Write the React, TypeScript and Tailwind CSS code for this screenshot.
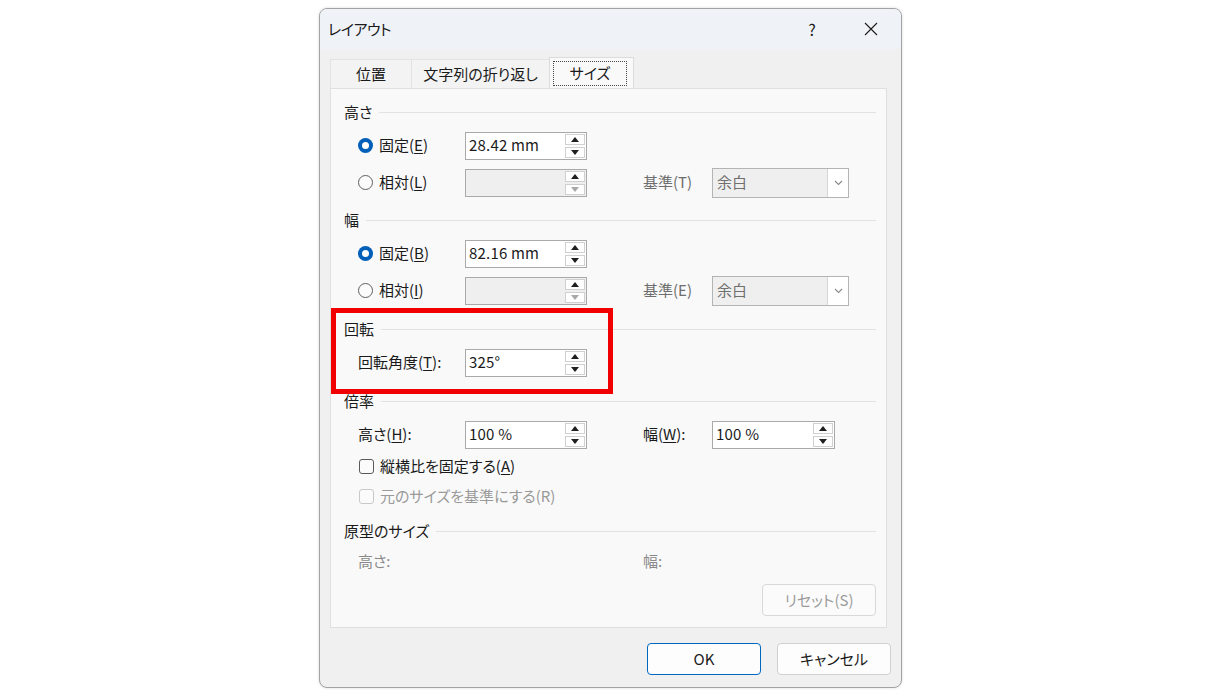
import type { ReactNode } from "react";

const font = {
  fontFamily: '"Noto Sans CJK JP", "Noto Sans", sans-serif',
  fontFeatureSettings: '"palt"',
};

function Acc({ children }: { children: ReactNode }) {
  return <u className="underline decoration-1 underline-offset-[2px]">{children}</u>;
}

function Tri({ up, muted }: { up?: boolean; muted?: boolean }) {
  return (
    <svg width="8" height="5" viewBox="0 0 8 5">
      <polygon
        points={up ? "0,5 8,5 4,0" : "0,0 8,0 4,5"}
        fill={muted ? "#a8a8a8" : "#1f1f1f"}
      />
    </svg>
  );
}

function Spin({
  value,
  disabled,
  w = "w-[122px]",
}: {
  value?: string;
  disabled?: boolean;
  w?: string;
}) {
  return (
    <div
      className={`flex h-[28px] ${w} items-stretch border border-[#a9a9a9] ${
        disabled ? "bg-[#efefef]" : "bg-white"
      }`}
    >
      <span className="flex flex-1 items-center pl-[3px] text-[15px] tracking-[0.2px] text-[#1a1a1a]">
        {value}
      </span>
      <div className="flex w-[21px] flex-col gap-[2px] py-[1px] pr-[1px]">
        <div className="flex h-[11px] items-center justify-center border border-[#d0d0d0] bg-white">
          <Tri up />
        </div>
        <div className="flex h-[11px] items-center justify-center border border-[#d0d0d0] bg-white">
          <Tri muted={disabled} />
        </div>
      </div>
    </div>
  );
}

function Select() {
  return (
    <div className="flex h-[30px] w-[137px] items-stretch border border-[#b4b4b4] bg-[#efefef]">
      <span className="flex flex-1 items-center pl-[4px] text-[15px] text-[#707070]">余白</span>
      <div className="flex w-[21px] items-center justify-center border-l border-[#d6d6d6] bg-white">
        <svg width="9" height="6" viewBox="0 0 9 6">
          <path d="M1 1 L4.5 4.5 L8 1" fill="none" stroke="#8a8a8a" strokeWidth="1.1" />
        </svg>
      </div>
    </div>
  );
}

function Radio({ checked }: { checked?: boolean }) {
  return checked ? (
    <span className="flex h-[15px] w-[15px] items-center justify-center rounded-full bg-[#005fb8]">
      <span className="h-[7px] w-[7px] rounded-full bg-white" />
    </span>
  ) : (
    <span className="h-[15px] w-[15px] rounded-full border border-[#5f5f5f] bg-[#fbfbfb]" />
  );
}

function Check({ disabled }: { disabled?: boolean }) {
  return (
    <span
      className={`h-[15px] w-[15px] rounded-[3px] border bg-[#fbfbfb] ${
        disabled ? "border-[#c9c9c9]" : "border-[#5a5a5a]"
      }`}
    />
  );
}

function Header({ title, mt = "mt-[10px]" }: { title: string; mt?: string }) {
  return (
    <div className={`flex h-[20px] items-center ${mt}`}>
      <span className="text-[15px] text-[#1a1a1a]">{title}</span>
      <span className="ml-[7px] h-px flex-1 bg-[#e2e2e2]" />
    </div>
  );
}

function Tab({ label, active, w }: { label: string; active?: boolean; w: string }) {
  if (active) {
    return (
      <div
        className={`-mb-px flex h-[32px] ${w} items-center justify-center border border-b-0 border-[#dcdcdc] bg-[#f9f9f9] py-[3px] pl-[3px] pr-[6px]`}
      >
        <div className="flex h-full w-full items-center justify-center border border-dotted border-[#444]">
          <span className="text-[15px] text-[#1a1a1a]">{label}</span>
        </div>
      </div>
    );
  }
  return (
    <div
      className={`flex h-[29px] ${w} items-center justify-center border border-b-0 border-r-0 border-[#e3e3e3] bg-[#f3f3f3]`}
    >
      <span className="text-[15px] text-[#1a1a1a]">{label}</span>
    </div>
  );
}

export default function App() {
  return (
    <div className="h-[699px] overflow-hidden bg-white pl-[319px] pt-[8px]" style={font}>
      <div className="flex h-[680px] w-[583px] flex-col overflow-hidden rounded-[8px] border border-[#a3a3a3] bg-[#f0f0f0] shadow-[0_0_3px_rgba(0,0,0,0.15)]">
        {/* title bar */}
        <div className="flex h-[40px] shrink-0 items-center bg-[#eff3f8] pl-[8px]">
          <span className="text-[15px] tracking-[-0.5px] text-[#1a1a1a]">レイアウト</span>
          <div className="ml-auto flex items-center gap-[13px] pr-[7px]">
            <span className="flex h-[30px] w-[46px] items-center justify-center text-[16px] text-[#1a1a1a]">
              ?
            </span>
            <span className="flex h-[30px] w-[46px] items-center justify-center">
              <svg width="14" height="14" viewBox="0 0 14 14">
                <path d="M1 1 L13 13 M13 1 L1 13" stroke="#1a1a1a" strokeWidth="1.1" />
              </svg>
            </span>
          </div>
        </div>

        {/* tabs */}
        <div className="ml-[10px] mt-[8px] flex items-end">
          <Tab label="位置" w="w-[81px]" />
          <Tab label="文字列の折り返し" w="w-[138px]" />
          <Tab label="サイズ" w="w-[85px]" active />
        </div>

        {/* tab page */}
        <div className="relative ml-[10px] h-[540px] w-[557px] border border-[#e0e0e0] bg-[#f9f9f9] pb-[10px] pl-[13px] pr-[10px] pt-[13px] text-[15px] text-[#1a1a1a]">
          <Header title="高さ" mt="mt-0" />
          <div className="mt-[5px] flex h-[37px] items-center pl-[14px]">
            <div className="flex w-[107px] items-center gap-[6px]">
              <Radio checked />
              <span>
                固定(<Acc>E</Acc>)
              </span>
            </div>
            <Spin value="28.42 mm" />
          </div>
          <div className="flex h-[37px] items-center pl-[14px]">
            <div className="flex w-[107px] items-center gap-[6px]">
              <Radio />
              <span>
                相対(<Acc>L</Acc>)
              </span>
            </div>
            <Spin disabled />
            <span className="ml-[56px] w-[69px] text-[#6e6e6e]">基準(T)</span>
            <Select />
          </div>

          <Header title="幅" mt="mt-[9px]" />
          <div className="mt-[5px] flex h-[37px] items-center pl-[14px]">
            <div className="flex w-[107px] items-center gap-[6px]">
              <Radio checked />
              <span>
                固定(<Acc>B</Acc>)
              </span>
            </div>
            <Spin value="82.16 mm" />
          </div>
          <div className="flex h-[37px] items-center pl-[14px]">
            <div className="flex w-[107px] items-center gap-[6px]">
              <Radio />
              <span>
                相対(<Acc>I</Acc>)
              </span>
            </div>
            <Spin disabled />
            <span className="ml-[56px] w-[69px] text-[#6e6e6e]">基準(E)</span>
            <Select />
          </div>

          <Header title="回転" />
          <div className="mt-[5px] flex h-[37px] items-center pl-[14px]">
            <span className="w-[107px]">
              回転角度(<Acc>T</Acc>):
            </span>
            <Spin value="325°" />
          </div>

          <Header title="倍率" />
          <div className="mt-[5px] flex h-[37px] items-center pl-[14px]">
            <span className="w-[107px]">
              高さ(<Acc>H</Acc>):
            </span>
            <Spin value="100 %" />
            <span className="ml-[56px] w-[69px]">
              幅(<Acc>W</Acc>):
            </span>
            <Spin value="100 %" w="w-[123px]" />
          </div>
          <div className="flex h-[26px] items-center gap-[6px] pl-[15px]">
            <Check />
            <span>
              縦横比を固定する(<Acc>A</Acc>)
            </span>
          </div>
          <div className="flex h-[34px] items-center gap-[6px] pl-[15px] text-[#9a9a9a]">
            <Check disabled />
            <span>元のサイズを基準にする(R)</span>
          </div>

          <Header title="原型のサイズ" mt="mt-[8px]" />
          <div className="mt-[5px] flex h-[30px] items-center pl-[14px] text-[#8a8a8a]">
            <span className="w-[285px]">高さ:</span>
            <span>幅:</span>
          </div>
          <div className="mt-[8px] flex justify-end">
            <div className="flex h-[32px] w-[114px] items-center justify-center rounded-[4px] border border-[#d8d8d8] bg-[#fbfbfb] text-[#9c9c9c]">
              リセット(S)
            </div>
          </div>

          {/* red highlight around the rotation group */}
          <div className="pointer-events-none absolute left-0 top-[219px] h-[86px] w-[282px] border-[5px] border-[#f00000]" />
        </div>

        {/* dialog buttons */}
        <div className="mt-[15px] flex justify-end gap-[16px] pr-[10px]">
          <div className="flex h-[32px] w-[114px] items-center justify-center rounded-[4px] border-[1.5px] border-[#0067c0] bg-[#fdfdfd] text-[15px] text-[#1a1a1a]">
            OK
          </div>
          <div className="flex h-[32px] w-[114px] items-center justify-center rounded-[4px] border border-[#d0d0d0] bg-[#fdfdfd] text-[15px] text-[#1a1a1a]">
            キャンセル
          </div>
        </div>
      </div>
    </div>
  );
}
